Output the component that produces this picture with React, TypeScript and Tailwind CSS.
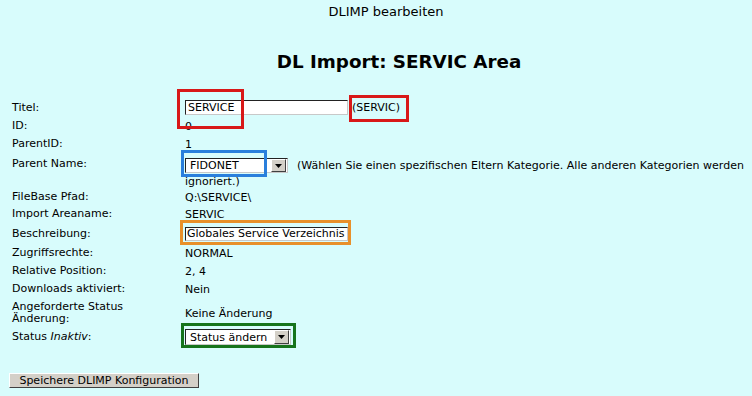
import React from "react";

const Arrow = () => (
  <span className="flex h-full w-[15px] items-center justify-center border border-t-white border-l-white border-b-[#404040] border-r-[#404040] bg-[#d4d0c8]">
    <svg width="7" height="4" viewBox="0 0 7 4"><path d="M0 0h7L3.5 4z" fill="#000" /></svg>
  </span>
);

const Row = ({ label, children, h = "h-[18px]" }: { label: React.ReactNode; children?: React.ReactNode; h?: string }) => (
  <div className={`grid grid-cols-[173px_1fr] items-center ${h}`}>
    <div className="pr-[30px] leading-[12px]">{label}</div>
    <div className="flex items-center leading-[13px]">{children}</div>
  </div>
);

export default function App() {
  return (
    <div className="min-h-screen w-full overflow-hidden bg-[#d8fcfc] font-['DejaVu_Sans',Verdana,sans-serif] text-[11px] text-black">
      <div className="pl-[20px] pt-[4px] text-center text-[13px] leading-[16px]">DLIMP bearbeiten</div>
      <h1 className="mt-[31px] pl-[46px] text-center text-[18.3px] font-bold leading-[22px]">DL Import: SERVIC Area</h1>

      <div className="mt-[25px] pl-[12px]">
        <Row label="Titel:" h="h-[19px]">
          <div className="relative flex items-center">
            <div className="flex h-[15px] w-[163px] items-center border border-t-[#222] border-l-[#222] border-b-[#c8c8c8] border-r-[#c8c8c8] bg-white pl-[2px]">SERVICE</div>
            <span className="ml-[4px]">(SERVIC)</span>
            <span className="absolute left-[-8px] top-[-11px] h-[40px] w-[67px] border-[3px] border-[#d81818]" />
            <span className="absolute left-[164px] top-[-5px] h-[27px] w-[60px] border-[3px] border-[#d81818]" />
          </div>
        </Row>
        <Row label="ID:">0</Row>
        <Row label="ParentID:">1</Row>

        <div className="grid h-[36px] grid-cols-[173px_1fr]">
          <div className="pt-[4px] leading-[13px]">Parent Name:</div>
          <div className="pt-[5px] leading-[13px]">
            <div className="flex h-[15px] items-center">
              <div className="relative flex h-[15px] w-[103px] items-center border border-t-[#222] border-l-[#222] border-b-[#c8c8c8] border-r-[#c8c8c8] bg-white">
                <span className="flex-1 pl-[4px]">FIDONET</span>
                <span className="mr-[1px] h-[13px]"><Arrow /></span>
                <span className="absolute left-[-5px] top-[-9px] h-[27px] w-[86px] border-[3px] border-[#2a7fdc]" />
              </div>
              <span className="ml-[9px] whitespace-nowrap">(Wählen Sie einen spezifischen Eltern Kategorie. Alle anderen Kategorien werden</span>
            </div>
            <div className="pt-[2px]">ignoriert.)</div>
          </div>
        </div>

        <Row label="FileBase Pfad:" h="h-[16px]">Q:\SERVICE\</Row>
        <Row label="Import Areaname:" h="h-[18px]">SERVIC</Row>
        <Row label="Beschreibung:" h="h-[21px]">
          <div className="relative">
            <div className="flex h-[14px] w-[163px] items-center border border-t-[#222] border-l-[#222] border-b-[#c8c8c8] border-r-[#c8c8c8] bg-white pl-[1px]">Globales Service Verzeichnis</div>
            <span className="absolute left-[-5px] top-[-7px] h-[25px] w-[171px] border-[3px] border-[#e8902a]" />
          </div>
        </Row>
        <Row label="Zugriffsrechte:">NORMAL</Row>
        <Row label="Relative Position:">2, 4</Row>
        <Row label="Downloads aktiviert:">Nein</Row>
        <Row label="Angeforderte Status Änderung:" h="h-[30px]">Keine Änderung</Row>
        <Row label={<span>Status <i>Inaktiv</i>:</span>}>
          <div className="relative flex h-[16px] w-[106px] items-center border border-t-[#222] border-l-[#222] border-b-[#c8c8c8] border-r-[#c8c8c8] bg-white">
            <span className="flex-1 pl-[4px]">Status ändern</span>
            <span className="mr-[1px] h-[14px]"><Arrow /></span>
            <span className="absolute left-[-5px] top-[-7px] h-[25px] w-[115px] border-[3px] border-[#16741c]" />
          </div>
        </Row>
      </div>

      <div className="mt-[27px] pl-[9px]">
        <button className="flex h-[15px] w-[190px] items-center justify-center border border-t-white border-l-white border-b-[#404040] border-r-[#404040] bg-[#d4d0c8] text-[11px] leading-[13px]">
          Speichere DLIMP Konfiguration
        </button>
      </div>
    </div>
  );
}
